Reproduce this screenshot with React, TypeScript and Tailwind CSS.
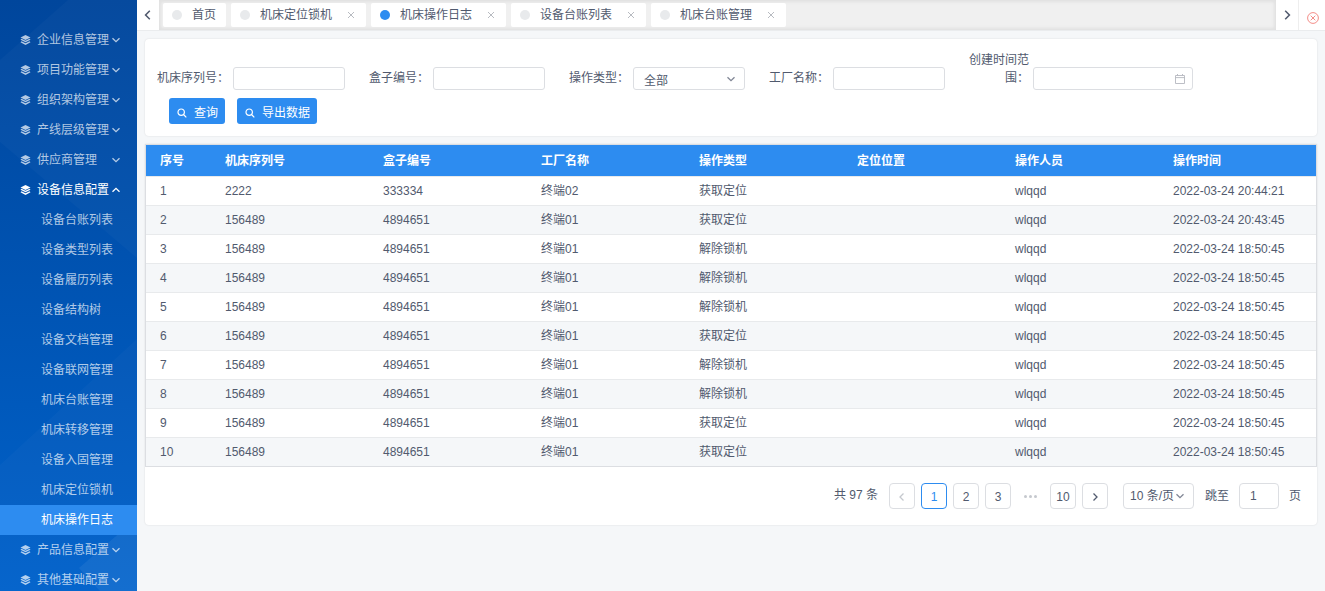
import type { ReactNode } from "react";
import clsx from "clsx";

const menus = ["企业信息管理", "项目功能管理", "组织架构管理", "产线层级管理", "供应商管理"];

const subMenus = [
    "设备台账列表",
    "设备类型列表",
    "设备履历列表",
    "设备结构树",
    "设备文档管理",
    "设备联网管理",
    "机床台账管理",
    "机床转移管理",
    "设备入固管理",
    "机床定位锁机",
    "机床操作日志",
];

const tabs = ["首页", "机床定位锁机", "机床操作日志", "设备台账列表", "机床台账管理"];

const columns = ["序号", "机床序列号", "盒子编号", "工厂名称", "操作类型", "定位位置", "操作人员", "操作时间"];

const rows = [
    ["2222", "333334", "终端02", "获取定位", "", "wlqqd", "2022-03-24 20:44:21"],
    ["156489", "4894651", "终端01", "获取定位", "", "wlqqd", "2022-03-24 20:43:45"],
    ["156489", "4894651", "终端01", "解除锁机", "", "wlqqd", "2022-03-24 18:50:45"],
    ["156489", "4894651", "终端01", "解除锁机", "", "wlqqd", "2022-03-24 18:50:45"],
    ["156489", "4894651", "终端01", "解除锁机", "", "wlqqd", "2022-03-24 18:50:45"],
    ["156489", "4894651", "终端01", "获取定位", "", "wlqqd", "2022-03-24 18:50:45"],
    ["156489", "4894651", "终端01", "解除锁机", "", "wlqqd", "2022-03-24 18:50:45"],
    ["156489", "4894651", "终端01", "解除锁机", "", "wlqqd", "2022-03-24 18:50:45"],
    ["156489", "4894651", "终端01", "获取定位", "", "wlqqd", "2022-03-24 18:50:45"],
    ["156489", "4894651", "终端01", "获取定位", "", "wlqqd", "2022-03-24 18:50:45"],
];

const arrows = {
    left: "M6.5 1.5 3 5l3.5 3.5",
    right: "M3.5 1.5 7 5 3.5 8.5",
    down: "M1.5 3.2 5 6.7l3.5-3.5",
    up: "M1.5 6.8 5 3.3l3.5 3.5",
};

function Arrow({ dir, className }: { dir: keyof typeof arrows; className?: string }) {
    return (
        <svg viewBox="0 0 10 10" className={clsx("shrink-0", className)} fill="none" stroke="currentColor" strokeWidth="1.3">
            <path d={arrows[dir]} />
        </svg>
    );
}

function LayersIcon() {
    return (
        <svg viewBox="0 0 12 12" className="mr-[5px] size-3 shrink-0" fill="currentColor">
            <path d="M5.5 .9 10.5 3.4 5.5 5.9 .5 3.4z" />
            <path d="M1.5 4.7 5.5 6.7l4-2 1 1L5.5 8.3 .5 5.7z" />
            <path d="M1.5 7.2 5.5 9.2l4-2 1 1L5.5 10.9 .5 8.2z" />
        </svg>
    );
}

function SearchIcon() {
    return (
        <svg viewBox="0 0 10 10" className="mr-[7px] size-[10px]" fill="none" stroke="currentColor" strokeWidth="1.2">
            <circle cx="4.2" cy="4.2" r="3.2" />
            <path d="m6.5 6.5 2.8 2.8" />
        </svg>
    );
}

function MenuItem({ title, open }: { title: string; open?: boolean }) {
    return (
        <div className={clsx("flex h-[30px] items-center pl-5", open ? "text-white" : "text-white/70")}>
            <LayersIcon />
            <span className="w-[74px] whitespace-nowrap">{title}</span>
            <Arrow dir={open ? "up" : "down"} className="size-[10px]" />
        </div>
    );
}

function Sidebar() {
    return (
        <aside className="relative h-full w-[137px] shrink-0 overflow-hidden bg-linear-to-b from-[#00469c] to-[#0062cb]">
            <svg className="absolute inset-0" width="137" height="591" fill="#fff">
                <path d="M0 60 68 0H137V258L0 142z" opacity=".025" />
                <path d="M137 339V591H0V465z" opacity=".025" />
                <path d="M137 518V591H100L79 568z" opacity=".06" />
            </svg>
            <nav className="relative pt-[25px]">
                {menus.map((title) => (
                    <MenuItem key={title} title={title} />
                ))}
                <MenuItem title="设备信息配置" open />
                {subMenus.map((title) => (
                    <div
                        key={title}
                        className={clsx(
                            "flex h-[30px] items-center pl-[41px]",
                            title === "机床操作日志" ? "bg-[#2d8cf0] text-white" : "text-white/70"
                        )}
                    >
                        {title}
                    </div>
                ))}
                <MenuItem title="产品信息配置" />
                <MenuItem title="其他基础配置" />
            </nav>
        </aside>
    );
}

function TabBar() {
    return (
        <div className="flex h-[31px] border-b border-[#eaecee] bg-[#f0f0f0]">
            <div className="flex w-[22px] items-center justify-center bg-white">
                <Arrow dir="left" className="size-3" />
            </div>
            <div className="flex flex-1 gap-[5px] pt-[3px] pl-[4px] shadow-[inset_0_0_3px_2px_rgba(100,100,100,0.1)]">
                {tabs.map((tab, i) => (
                    <div
                        key={tab}
                        className={clsx(
                            "flex h-6 items-center rounded-[2px] bg-white pl-[9px]",
                            i === 0 ? "w-[63px]" : "w-[135px]"
                        )}
                    >
                        <i className={clsx("mr-[10px] size-[10px] rounded-full", i === 2 ? "bg-[#2d8cf0]" : "bg-[#e8eaec]")} />
                        <span className="whitespace-nowrap">{tab}</span>
                        {i > 0 && (
                            <svg viewBox="0 0 8 8" className="ml-[15px] size-2" stroke="#b8bbc1" strokeWidth="1">
                                <path d="m1 1 6 6M7 1 1 7" />
                            </svg>
                        )}
                    </div>
                ))}
            </div>
            <div className="flex w-[23px] items-center justify-center border-r border-[#eee] bg-white">
                <Arrow dir="right" className="size-3" />
            </div>
            <div className="flex w-[26px] items-center justify-center bg-white pt-[6px] pl-0.5">
                <svg viewBox="0 0 12 12" className="size-3" fill="none" stroke="#f0706a" strokeWidth=".8">
                    <circle cx="6" cy="6" r="5.4" />
                    <path d="m3.7 3.7 4.6 4.6M8.3 3.7 3.7 8.3" />
                </svg>
            </div>
        </div>
    );
}

function Field({ label, wide, children }: { label: string; wide?: boolean; children?: ReactNode }) {
    return (
        <div className="flex items-end">
            <div className={clsx("w-[76px] pb-[3px] text-right leading-[18px]", wide ? "pl-3" : "whitespace-nowrap")}>
                {label}
            </div>
            <div
                className={clsx(
                    "ml-1 flex h-[23px] items-center justify-between rounded-[3px] border border-[#dcdee2] bg-white pl-[10px]",
                    wide ? "w-[160px] pr-[6px]" : "w-[112px] pr-2"
                )}
            >
                {children}
            </div>
        </div>
    );
}

function SearchForm() {
    return (
        <section className="mx-2 mt-2 h-[97px] rounded-[4px] bg-white shadow-[0_0_2px_rgba(0,0,0,0.12)]">
            <div className="flex h-[51px] items-end gap-2 pl-2">
                <Field label="机床序列号：" />
                <Field label="盒子编号：" />
                <Field label="操作类型：">
                    <span className="pt-[4px]">全部</span>
                    <Arrow dir="down" className="size-[10px] text-[#808695]" />
                </Field>
                <Field label="工厂名称：" />
                <Field label="创建时间范围：" wide>
                    <span />
                    <svg viewBox="0 0 12 12" className="mt-px size-3" fill="none" stroke="#b5b8c0" strokeWidth=".9">
                        <path d="M1.5 2.5h9v8h-9zM1.5 4.6h9M3.5 1v1.5M8.5 1v1.5" />
                    </svg>
                </Field>
            </div>
            <div className="mt-2 flex gap-3 pl-6 text-white">
                <button className="flex h-[26px] w-14 items-center rounded-[3px] bg-[#2d8cf0] pt-[3px] pl-2">
                    <SearchIcon />
                    查询
                </button>
                <button className="flex h-[26px] w-20 items-center rounded-[3px] bg-[#2d8cf0] pt-[3px] pl-2 whitespace-nowrap">
                    <SearchIcon />
                    导出数据
                </button>
            </div>
        </section>
    );
}

function LogTable() {
    return (
        <table className="w-[1171px] table-fixed border-separate border-spacing-0 text-left">
            <thead>
                <tr className="h-8 bg-[#2d8cf0] text-white">
                    {columns.map((col, i) => (
                        <th
                            key={col}
                            className={clsx("border-b border-[#e8eaec] p-0 pl-[14px] font-bold", i === 0 && "w-[65px]")}
                        >
                            {col}
                        </th>
                    ))}
                </tr>
            </thead>
            <tbody>
                {rows.map((row, i) => (
                    <tr key={i} className="group h-[29px] even:bg-[#f5f7f9] last:h-7">
                        {[i + 1, ...row].map((cell, j) => (
                            <td
                                key={j}
                                className="border-b border-[#e8eaec] p-0 pl-[14px] whitespace-nowrap group-last:border-b-0"
                            >
                                {cell}
                            </td>
                        ))}
                    </tr>
                ))}
            </tbody>
        </table>
    );
}

function PageButton({ active, children }: { active?: boolean; children: ReactNode }) {
    return (
        <div
            className={clsx(
                "flex h-[26px] w-[26px] items-center justify-center rounded-[4px] border pt-px",
                active ? "border-[#2d8cf0] text-[#2d8cf0]" : "border-[#dcdee2]"
            )}
        >
            {children}
        </div>
    );
}

function Pagination() {
    return (
        <div className="mt-4 flex items-center justify-end pr-4">
            <span className="mr-[11px] pb-[3px]">共 97 条</span>
            <div className="flex gap-[6px]">
                <PageButton>
                    <Arrow dir="left" className="size-[10px] text-[#c5c8ce]" />
                </PageButton>
                <PageButton active>1</PageButton>
                <PageButton>2</PageButton>
                <PageButton>3</PageButton>
                <div className="flex w-[27px] items-center justify-center gap-[2px]">
                    <i className="size-[3px] rounded-full bg-[#c5c8ce]" />
                    <i className="size-[3px] rounded-full bg-[#c5c8ce]" />
                    <i className="size-[3px] rounded-full bg-[#c5c8ce]" />
                </div>
                <PageButton>10</PageButton>
                <PageButton>
                    <Arrow dir="right" className="size-[10px]" />
                </PageButton>
            </div>
            <div className="ml-[15px] flex h-[26px] w-[71px] items-center rounded-[4px] border border-[#dcdee2] pl-[6px] whitespace-nowrap">
                10 条/页
                <Arrow dir="down" className="ml-px size-[10px] text-[#808695]" />
            </div>
            <span className="mr-[10px] ml-[11px] pb-px">跳至</span>
            <div className="flex h-[26px] w-10 items-center rounded-[4px] border border-[#dcdee2] pl-[10px]">1</div>
            <span className="ml-[10px] pb-px">页</span>
        </div>
    );
}

export default function App() {
    return (
        <div
            lang="zh-CN"
            className="flex h-[591px] w-[1325px] overflow-hidden bg-[#f5f7f9] font-['Liberation_Sans','Noto_Sans_CJK_SC',sans-serif] text-[12px] leading-[18px] text-[#515a6e]"
        >
            <Sidebar />
            <main className="min-w-0 flex-1">
                <TabBar />
                <SearchForm />
                <section className="mx-2 mt-2 h-[381px] rounded-b-[4px] bg-white shadow-[0_0_2px_rgba(0,0,0,0.12)]">
                    <div className="overflow-hidden border border-[#dcdee2]">
                        <LogTable />
                    </div>
                    <Pagination />
                </section>
            </main>
        </div>
    );
}
